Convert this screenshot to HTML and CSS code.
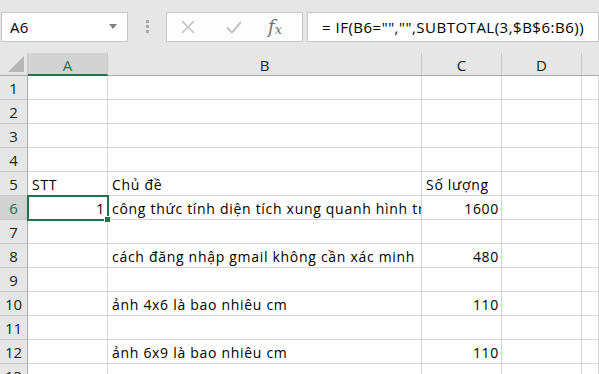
FILE: index.html
```html
<!DOCTYPE html>
<html lang="vi">
<head>
  <meta charset="UTF-8">
  <title>Sheet1</title>
  <link rel="stylesheet" href="styles.css">
</head>
<body>

  <!-- Name box + formula bar -->
  <div class="toolbar">
    <div class="name-box">
      <span>A6</span>
      <svg class="caret" width="8" height="5" viewBox="0 0 8 5"><path d="M0 0h8L4 5z" fill="#808080"/></svg>
    </div>
    <div class="grip"><i></i><i></i><i></i></div>
    <div class="fx-buttons">
      <svg class="cancel" width="16" height="16" viewBox="0 0 16 16"><path d="M2 2l12 12M14 2L2 14" stroke="#c2c2c2" stroke-width="1.6" fill="none"/></svg>
      <svg class="enter" width="18" height="16" viewBox="0 0 18 16"><path d="M2 8.5l5 5L16 3" stroke="#c2c2c2" stroke-width="2" fill="none"/></svg>
      <span class="fx">f<sub>x</sub></span>
    </div>
    <div class="formula">= IF(B6="","",SUBTOTAL(3,$B$6:B6))</div>
  </div>

  <!-- Sheet grid -->
  <div class="sheet">
    <div class="corner">
      <svg width="16" height="16" viewBox="0 0 16 16"><path d="M16 0V16H0z" fill="#b7b7b7"/></svg>
    </div>
    <div class="col-head active">A</div>
    <div class="col-head">B</div>
    <div class="col-head">C</div>
    <div class="col-head">D</div>
    <div class="col-head last"></div>

    <div class="row-head">1</div><div class="cell"></div><div class="cell"></div><div class="cell"></div><div class="cell"></div><div class="cell"></div>
    <div class="row-head">2</div><div class="cell"></div><div class="cell"></div><div class="cell"></div><div class="cell"></div><div class="cell"></div>
    <div class="row-head">3</div><div class="cell"></div><div class="cell"></div><div class="cell"></div><div class="cell"></div><div class="cell"></div>
    <div class="row-head">4</div><div class="cell"></div><div class="cell"></div><div class="cell"></div><div class="cell"></div><div class="cell"></div>
    <div class="row-head">5</div><div class="cell">STT</div><div class="cell">Chủ đề</div><div class="cell">Số lượng</div><div class="cell"></div><div class="cell"></div>
    <div class="row-head active">6</div><div class="cell num selected">1</div><div class="cell">công thức tính diện tích xung quanh hình trụ</div><div class="cell num">1600</div><div class="cell"></div><div class="cell"></div>
    <div class="row-head">7</div><div class="cell"></div><div class="cell"></div><div class="cell"></div><div class="cell"></div><div class="cell"></div>
    <div class="row-head">8</div><div class="cell"></div><div class="cell">cách đăng nhập gmail không cần xác minh</div><div class="cell num">480</div><div class="cell"></div><div class="cell"></div>
    <div class="row-head">9</div><div class="cell"></div><div class="cell"></div><div class="cell"></div><div class="cell"></div><div class="cell"></div>
    <div class="row-head">10</div><div class="cell"></div><div class="cell">ảnh 4x6 là bao nhiêu cm</div><div class="cell num">110</div><div class="cell"></div><div class="cell"></div>
    <div class="row-head">11</div><div class="cell"></div><div class="cell"></div><div class="cell"></div><div class="cell"></div><div class="cell"></div>
    <div class="row-head">12</div><div class="cell"></div><div class="cell">ảnh 6x9 là bao nhiêu cm</div><div class="cell num">110</div><div class="cell"></div><div class="cell"></div>
    <div class="row-head">13</div><div class="cell"></div><div class="cell"></div><div class="cell"></div><div class="cell"></div><div class="cell"></div>
  </div>

</body>
</html>
```

FILE: styles.css
```css
body {
  margin: 0;
  font-family: "Open Sans", "Liberation Sans", sans-serif;
  font-size: 14px;
  letter-spacing: 0.7px;
  color: #000;
  background: #e6e6e6;
  overflow: hidden;
}

/* toolbar */
.toolbar {
  display: flex;
  align-items: center;
  height: 53px;
  padding: 0 0 0 1px;
  box-sizing: border-box;
}

.name-box,
.fx-buttons,
.formula {
  height: 30px;
  box-sizing: border-box;
  border: 1px solid #c6c6c6;
  background: #fff;
  display: flex;
  align-items: center;
}

.name-box {
  width: 127px;
  padding: 0 10px 0 8px;
  justify-content: space-between;
  font-size: 15px;
  letter-spacing: 0.3px;
}

.grip {
  width: 38px;
  display: flex;
  flex-direction: column;
  align-items: center;
  gap: 2px;
}

.grip i {
  width: 3px;
  height: 3px;
  background: #a8a8a8;
}

.fx-buttons {
  width: 137px;
  background: #fdfdfd;
  padding-left: 13px;
}

.enter {
  margin-left: 29px;
}

.fx {
  margin-left: 25px;
  font-family: "DejaVu Serif", "Liberation Serif", serif;
  font-style: italic;
  font-size: 18px;
  letter-spacing: 0;
  color: #707070;
}

.fx sub {
  font-size: 13px;
  vertical-align: -1px;
}

.formula {
  flex: 1;
  margin-left: 4px;
  padding-left: 14px;
  white-space: nowrap;
  font-size: 15px;
  letter-spacing: 0.5px;
}

/* grid */
.sheet {
  display: grid;
  grid-template-columns: 28px 80px 314px 80px 80px 1fr;
  grid-template-rows: 23px;
  grid-auto-rows: 24px;
  background: #fff;
}

.corner,
.col-head,
.row-head {
  background: #e6e6e6;
  box-sizing: border-box;
  color: #222;
  letter-spacing: 0;
}

.corner {
  border-right: 1px solid #c6c6c6;
  border-bottom: 1px solid #ababab;
  display: flex;
  align-items: flex-end;
  justify-content: flex-end;
  padding: 0 3px 3px 0;
}

.col-head {
  border-right: 1px solid #c6c6c6;
  border-bottom: 1px solid #ababab;
  display: flex;
  align-items: center;
  justify-content: center;
  padding-top: 2px;
  font-size: 15px;
}

.col-head.last {
  border-right: none;
}

.col-head.active {
  background: #d2d2d2;
  color: #217346;
  border-bottom: 2px solid #217346;
}

.row-head {
  border-right: 1px solid #ababab;
  border-bottom: 1px solid #c6c6c6;
  display: flex;
  align-items: center;
  justify-content: center;
  font-size: 15px;
}

.row-head.active {
  background: #d2d2d2;
  color: #217346;
}

.cell {
  box-sizing: border-box;
  border-right: 1px solid #d4d4d4;
  border-bottom: 1px solid #d4d4d4;
  padding: 0 2px 1px 4px;
  display: flex;
  align-items: flex-end;
  white-space: nowrap;
  overflow: hidden;
  position: relative;
}

.cell.num {
  justify-content: flex-end;
}

.cell.selected {
  overflow: visible;
  outline: 2px solid #217346;
  outline-offset: -1px;
  z-index: 1;
}

.cell.selected::after {
  content: "";
  position: absolute;
  right: -4px;
  bottom: -4px;
  width: 5px;
  height: 5px;
  background: #217346;
  border: 1px solid #fff;
}
```
